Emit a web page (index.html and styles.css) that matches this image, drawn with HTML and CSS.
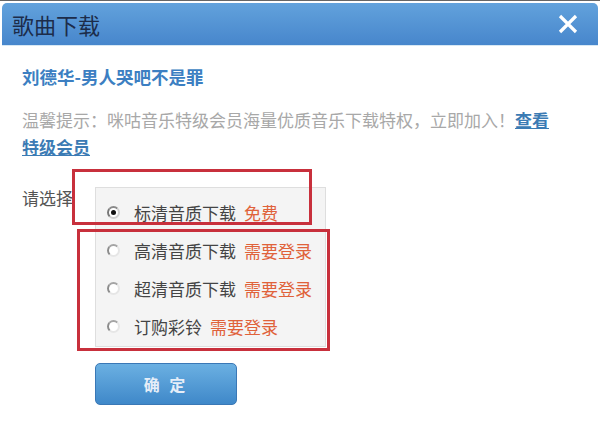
FILE: index.html
```html
<!DOCTYPE html>
<html lang="zh-CN">
<head>
    <meta charset="UTF-8">
    <meta name="viewport" content="width=device-width, initial-scale=1.0">
    <title>歌曲下载</title>
    <link rel="stylesheet" href="styles.css">
</head>
<body>
    <div class="dialog">
        <div class="header">
            <span class="header-title">歌曲下载</span>
            <svg class="close" width="20" height="20" viewBox="0 0 20 20">
                <path d="M2 2 L18 18 M18 2 L2 18" stroke="#fff" stroke-width="3.2" fill="none"/>
            </svg>
        </div>
        <div class="content">
            <div class="song">刘德华-男人哭吧不是罪</div>
            <div class="tip">温馨提示：咪咕音乐特级会员海量优质音乐下载特权，立即加入！<a href="#">查看<br>特级会员</a></div>

            <div class="choose">
                <div class="label">请选择</div>
                <div class="options">
                    <div class="opt"><span class="radio checked"></span>标清音质下载<span class="tag">免费</span></div>
                    <div class="opt"><span class="radio"></span>高清音质下载<span class="tag">需要登录</span></div>
                    <div class="opt"><span class="radio"></span>超清音质下载<span class="tag">需要登录</span></div>
                    <div class="opt"><span class="radio"></span>订购彩铃<span class="tag">需要登录</span></div>
                </div>
                <!-- 截图上的红色标注框 -->
                <div class="mark mark1"></div>
                <div class="mark mark2"></div>
            </div>

            <button type="button" class="btn-ok">确 定</button>
        </div>
    </div>
</body>
</html>
```

FILE: styles.css
```css
body {
    margin: 0;
    background-color: #fff;
    font-family: "Noto Sans CJK SC", sans-serif;
}

div.dialog {
    padding-top: 2px;
    border-top: 1px solid #666;
}

div.dialog div.header {
    height: 42px;
    margin: 0 2px;
    border-radius: 5px 5px 0 0;
    background: linear-gradient(#62a2dc, #4786cc);
    border-bottom: 1px solid #d7e8f4;
    display: flex;
    align-items: center;
    justify-content: space-between;
    padding: 0 20px 0 10px;
}

div.dialog div.header span.header-title {
    font-size: 22px;
    color: #1c2c4a;
}

div.dialog div.content {
    padding: 19px 0 0 22px;
}

div.content div.song {
    font-size: 17.5px;
    font-weight: bold;
    line-height: 24px;
    color: #3c7fc2;
}

div.content div.tip {
    margin-top: 17px;
    width: 560px;
    font-size: 17px;
    line-height: 27px;
    color: #a8a8a8;
}

div.content div.tip a {
    color: #3b7bb4;
    font-weight: bold;
}

div.content div.choose {
    position: relative;
    display: flex;
    margin-top: 27px;
}

div.choose div.label {
    width: 50px;
    overflow: hidden;
    white-space: nowrap;
    font-size: 17px;
    line-height: 22px;
    color: #555;
}

div.choose div.options {
    margin-left: 23px;
    width: 231px;
    padding: 5px 0 1px 11px;
    box-sizing: border-box;
    background-color: #f4f4f4;
    border: 1px solid #dedede;
}

div.options div.opt {
    height: 38px;
    display: flex;
    align-items: center;
    font-size: 17px;
    color: #444;
    white-space: nowrap;
}

div.options div.opt span.radio {
    width: 9px;
    height: 9px;
    border-radius: 50%;
    border: 2px solid;
    border-color: #a5a5a5 #e6e6e6 #e6e6e6 #8c8c8c;
    background-color: #fff;
    margin-right: 14px;
    position: relative;
}

div.options div.opt span.radio.checked {
    border-color: #8a8a8a #d0d0d0 #d0d0d0 #777;
}

div.options div.opt span.radio.checked::after {
    content: "";
    position: absolute;
    left: 2px;
    top: 2px;
    width: 5px;
    height: 5px;
    border-radius: 50%;
    background-color: #111;
}

div.options div.opt span.tag {
    margin-left: 8px;
    color: #e0623a;
}

div.choose div.mark {
    position: absolute;
    border: 3px solid #c8303c;
}

div.choose div.mark1 {
    left: 50px;
    top: -18px;
    width: 234px;
    height: 50px;
}

div.choose div.mark2 {
    left: 55px;
    top: 42px;
    width: 247px;
    height: 116px;
}

button.btn-ok {
    margin: 16px 0 0 73px;
    width: 142px;
    height: 42px;
    border: 1px solid #3a78b6;
    border-radius: 5px;
    background: linear-gradient(#6bb0e2, #3f88c9);
    color: #e6eef8;
    font-family: "Noto Sans CJK SC", sans-serif;
    font-size: 16px;
    font-weight: bold;
    letter-spacing: 3px;
}
```
